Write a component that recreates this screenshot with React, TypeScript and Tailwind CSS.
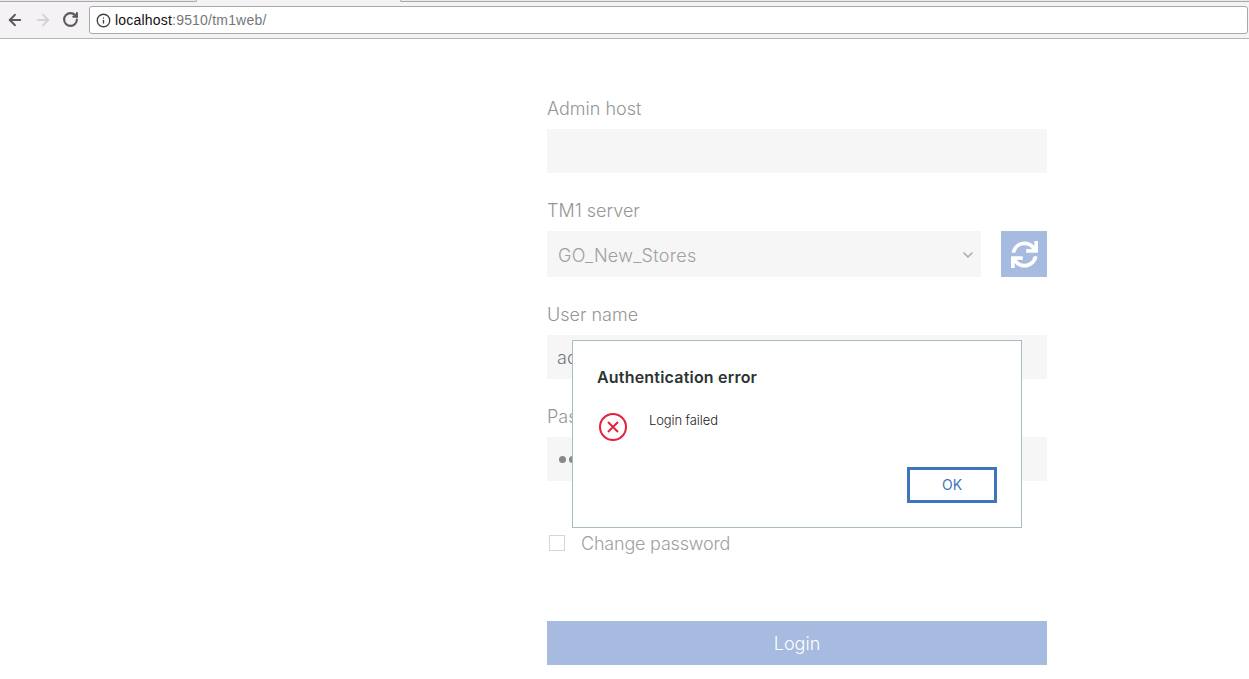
import { ArrowLeft, ArrowRight, RotateCw, Info, ChevronDown } from "lucide-react"
import { FaSync } from "react-icons/fa"

function Field({ label, children }: { label: string; children: React.ReactNode }) {
  return (
    <div className="mb-[27px]">
      <div className="h-[31px] text-[18px] font-light leading-[21px] text-[#969696]">{label}</div>
      {children}
    </div>
  )
}

export default function App() {
  return (
    <div className="relative h-[679px] w-[1249px] overflow-hidden bg-white font-['Inter',sans-serif]">
      {/* browser chrome */}
      <div className="relative flex h-[39px] items-center border-b border-[#b5b5b5] bg-[#f5f2f6] pl-[6px] pr-[1px] pt-[1px] font-['Liberation_Sans',sans-serif]">
        <div className="absolute left-0 top-0 h-[2px] w-[197px] rounded-br-sm border-b border-r border-[#a8a8a8] bg-[#ece9ed]" />
        <div className="absolute right-0 top-0 h-[2px] w-[849px] rounded-bl-sm border-b border-l border-[#a8a8a8] bg-[#ece9ed]" />
        <ArrowLeft size={18} strokeWidth={2.5} className="text-[#5a5a5a]" />
        <ArrowRight size={18} strokeWidth={2.5} className="ml-[10px] text-[#d4d2d5]" />
        <RotateCw size={17} strokeWidth={3} className="ml-[10px] text-[#5a5a5a]" />
        <div className="ml-[10px] flex h-[28px] flex-1 items-center rounded-[3px] border border-[#a9a9a9] bg-white pl-[6px] pt-[1px] text-[14px] tracking-[0.2px]">
          <Info size={15} strokeWidth={2.2} className="text-[#444]" />
          <span className="ml-[4px] text-[#111]">localhost</span>
          <span className="text-[#777]">:9510/tm1web/</span>
        </div>
      </div>

      {/* login form */}
      <div className="ml-[547px] w-[500px] pt-[59px]">
        <Field label="Admin host">
          <div className="h-[44px] bg-[#f6f6f6]" />
        </Field>
        <Field label="TM1 server">
          <div className="flex gap-[20px]">
            <div className="flex h-[46px] flex-1 items-center justify-between bg-[#f6f6f6] pl-[11px] pr-[5px] pt-[2px] text-[18px] font-light tracking-[0.3px] text-[#a0a0a0]">
              GO_New_Stores
              <ChevronDown size={16} strokeWidth={2.5} className="text-[#b0b0b0]" />
            </div>
            <div className="flex h-[46px] w-[46px] items-center justify-center bg-[#a7bbe0] text-white">
              <FaSync size={27} />
            </div>
          </div>
        </Field>
        <Field label="User name">
          <div className="flex h-[44px] items-center bg-[#f6f6f6] pl-[10px] text-[18px] font-light text-[#777]">admin</div>
        </Field>
        <Field label="Password">
          <div className="flex h-[44px] items-center gap-[3px] bg-[#f6f6f6] pl-[12px]">
            {[0, 1, 2, 3, 4].map((i) => (
              <span key={i} className="h-[7px] w-[7px] rounded-full bg-[#888]" />
            ))}
          </div>
        </Field>
        <div className="mt-[51px] flex h-[22px] items-center pl-[2px] text-[18px] font-light tracking-[-0.2px] text-[#a0a0a0]">
          <span className="h-[16px] w-[16px] border border-[#d5d5d5]" />
          <span className="ml-[16px]">Change password</span>
        </div>
        <div className="mt-[67px] flex h-[44px] items-center justify-center bg-[#a7bbe0] pt-[1px] text-[18px] font-light text-white">
          Login
        </div>
      </div>

      {/* error dialog */}
      <div className="absolute left-[572px] top-[340px] h-[188px] w-[450px] border border-[#a9bcc4] bg-white">
        <div className="absolute left-[24px] top-[27px] text-[16px] font-semibold leading-[19px] tracking-[0.2px] text-[#2c3332]">
          Authentication error
        </div>
        <svg className="absolute left-[26px] top-[72px]" width="28" height="28" viewBox="0 0 28 28" fill="none" stroke="#e8203a">
          <circle cx="14" cy="14" r="13" strokeWidth="2" />
          <path d="M9 9l10 10M19 9L9 19" strokeWidth="2" />
        </svg>
        <div className="absolute left-[76px] top-[72px] text-[13px] font-light leading-[15px] tracking-[-0.1px] text-[#222]">Login failed</div>
        <div className="absolute left-[334px] top-[126px] flex h-[36px] w-[90px] items-center justify-center border-[3px] border-[#3f76bb] pb-[1px] text-[14px] text-[#3f76bb]">
          OK
        </div>
      </div>
    </div>
  )
}
